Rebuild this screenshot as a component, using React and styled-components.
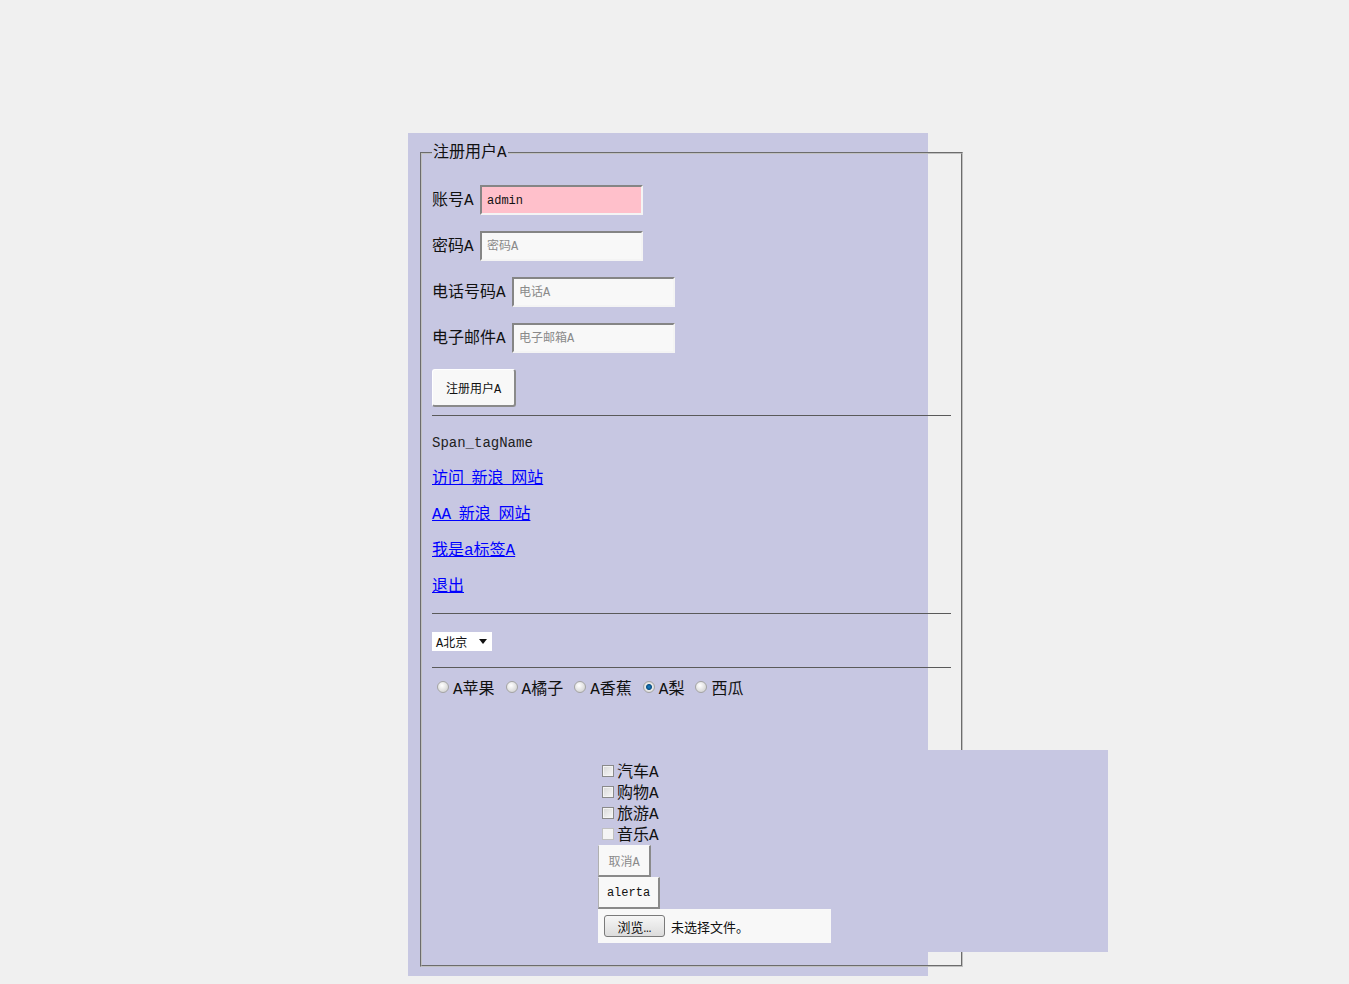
import React from "react";
import styled, { createGlobalStyle } from "styled-components";

const Global = createGlobalStyle`
    body{
        margin:0;
        background:#f0f0f0;
        font-family:"Liberation Mono","Noto Sans CJK SC",monospace;
        color:#111;
    }
`

const lavender = "#c7c7e2"

const Panel = styled.div`
    width:520px;
    box-sizing:border-box;
    margin:133px 0 0 408px;
    padding:10px 0 9px 12px;
    background:${lavender};
`
const Fieldset = styled.fieldset`
    width:543px;
    box-sizing:border-box;
    margin:0;
    min-width:0;
    padding:0 10px 13px 10px;
    border:2px groove #c0c0c0;
`
const Legend = styled.legend`
    padding:0 1px;
    font-size:16px;
    line-height:20px;
`
const Form = styled.div`
    padding-top:22px;
`
const FormRow = styled.div`
    display:flex;
    align-items:center;
    height:30px;
    margin-bottom:16px;
`
const Label = styled.label`
    width:${p=>p.w}px;
    font-size:16px;
    line-height:16px;
    padding-top:1px;
    white-space:nowrap;
`
const Input = styled.input`
    width:163px;
    height:30px;
    box-sizing:border-box;
    border-style:solid;
    border-width:2px;
    border-color:#858585 #f4f4f4 #f4f4f4 #858585;
    padding:1px 5px 0;
    margin:0;
    outline:none;
    font-family:"Liberation Mono","Noto Sans CJK SC",monospace;
    font-size:12px;
    color:#111;
    background:${p=>p.pink ? "#ffc0cb" : "#f8f8f8"};
    &::placeholder{ color:#8a8a8a; }
`
const SubmitButton = styled.button`
    width:84px;
    height:38px;
    box-sizing:border-box;
    margin:0;
    padding:0;
    border-style:solid;
    border-width:1px 2px 2px 1px;
    border-color:#fff #8a8a8a #8a8a8a #fff;
    border-radius:3px;
    background:#f8f8f8;
    font-family:"Liberation Mono","Noto Sans CJK SC",monospace;
    font-size:12px;
    color:#111;
`
const Rule = styled.hr`
    margin:${p=>p.top}px 0 0;
    border:0;
    border-top:1px solid #5a5a5a;
    height:0;
`
const Items = styled.div`
    padding-top:9px;
`
const Item = styled.div`
    height:36px;
    line-height:36px;
    font-size:${p=>p.small ? 14 : 16}px;
    color:#222;
`
const Link = styled.a`
    color:#0000ff;
    text-decoration:underline;
    font-size:16px;
    word-spacing:-2px;
`
const SelectBox = styled.div`
    display:flex;
    align-items:center;
    justify-content:space-between;
    width:60px;
    height:19px;
    box-sizing:border-box;
    margin-top:18px;
    padding:0 5px 0 4px;
    background:#fff;
    font-size:12px;
`
const RadioRow = styled.div`
    display:flex;
    align-items:center;
    height:20px;
    margin-top:9px;
`
const Radio = styled.input.attrs({type:"radio"})`
    appearance:none;
    width:12px;
    height:12px;
    margin:0 4px 0 5px;
    border:1px solid #a4a4a4;
    border-radius:50%;
    box-sizing:border-box;
    background:radial-gradient(circle at 40% 35%, #ffffff 0, #e4e4e4 50%, #c8c8c8 100%);
    &:checked{
        background:radial-gradient(circle, #1a86c8 0, #0a4f86 2.5px, #e8e8e8 3.5px, #d0d0d0 100%);
    }
`
const RadioLabel = styled.span`
    font-size:16px;
    margin-right:6px;
`
const Extra = styled.div`
    width:510px;
    height:202px;
    box-sizing:border-box;
    margin:53px 0 0 166px;
    padding-top:9px;
    background:${lavender};
`
const CheckRow = styled.div`
    display:flex;
    align-items:center;
    height:21px;
`
const Check = styled.input.attrs({type:"checkbox"})`
    appearance:none;
    width:12px;
    height:12px;
    margin:2px 3px 0 4px;
    box-sizing:border-box;
    border:1px solid ${p=>p.plain ? "#c0c0c0" : "#8a8a8a"};
    background:${p=>p.plain ? "#f4f4f4" : "linear-gradient(135deg, #d8d8d8, #f8f8f8)"};
    box-shadow:${p=>p.plain ? "none" : "inset 0 0 0 1px #f4f4f4"};
`
const CheckLabel = styled.span`
    font-size:16px;
`
const PlainButton = styled.button`
    display:block;
    width:${p=>p.w}px;
    height:32px;
    box-sizing:border-box;
    margin:${p=>p.gap ? 2 : 0}px 0 0;
    padding:0;
    border-style:solid;
    border-width:1px 2px 2px 1px;
    border-color:#f8f8f8 #8a8a8a #8a8a8a #b0b0b0;
    background:#f8f8f8;
    font-family:"Liberation Mono","Noto Sans CJK SC",monospace;
    font-size:12px;
    color:${p=>p.muted ? "#8a8a8a" : "#111"};
`
const FileRow = styled.div`
    display:flex;
    align-items:center;
    width:233px;
    height:34px;
    box-sizing:border-box;
    padding-left:6px;
    background:#f8f8f8;
`
const BrowseButton = styled.button`
    width:61px;
    height:22px;
    box-sizing:border-box;
    margin:0 6px 0 0;
    padding:0;
    border:1px solid #7a7a7a;
    border-radius:3px;
    background:linear-gradient(#f6f6f6, #dcdcdc);
    font-family:"Liberation Mono","Noto Sans CJK SC",monospace;
    font-size:13px;
    color:#111;
`
const FileText = styled.span`
    font-size:13px;
`

const fruits = ["A苹果","A橘子","A香蕉","A梨","西瓜"]
const hobbies = ["汽车A","购物A","旅游A","音乐A"]

const App = () => {
    return(
        <>
            <Global/>
            <Panel>
                <Fieldset>
                    <Legend>注册用户A</Legend>
                    <Form>
                        <FormRow>
                            <Label w={48}>账号A</Label>
                            <Input pink defaultValue="admin"/>
                        </FormRow>
                        <FormRow>
                            <Label w={48}>密码A</Label>
                            <Input placeholder="密码A"/>
                        </FormRow>
                        <FormRow>
                            <Label w={80}>电话号码A</Label>
                            <Input placeholder="电话A"/>
                        </FormRow>
                        <FormRow>
                            <Label w={80}>电子邮件A</Label>
                            <Input placeholder="电子邮箱A"/>
                        </FormRow>
                        <SubmitButton>注册用户A</SubmitButton>
                    </Form>
                    <Rule top={8}/>
                    <Items>
                        <Item small>Span_tagName</Item>
                        <Item><Link href="#">访问 新浪 网站</Link></Item>
                        <Item><Link href="#">AA 新浪 网站</Link></Item>
                        <Item><Link href="#">我是a标签A</Link></Item>
                        <Item><Link href="#">退出</Link></Item>
                    </Items>
                    <Rule top={8}/>
                    <SelectBox>
                        <span>A北京</span>
                        <svg width="8" height="5" viewBox="0 0 8 5"><path d="M0 0h8L4 5z" fill="#111"/></svg>
                    </SelectBox>
                    <Rule top={16}/>
                    <RadioRow>
                        {fruits.map(f=>(
                            <React.Fragment key={f}>
                                <Radio name="fruit" defaultChecked={f==="A梨"}/>
                                <RadioLabel>{f}</RadioLabel>
                            </React.Fragment>
                        ))}
                    </RadioRow>
                    <Extra>
                        {hobbies.map((h,i)=>(
                            <CheckRow key={h}>
                                <Check plain={i===3}/>
                                <CheckLabel>{h}</CheckLabel>
                            </CheckRow>
                        ))}
                        <PlainButton w={53} muted gap>取消A</PlainButton>
                        <PlainButton w={62}>alerta</PlainButton>
                        <FileRow>
                            <BrowseButton>浏览…</BrowseButton>
                            <FileText>未选择文件。</FileText>
                        </FileRow>
                    </Extra>
                </Fieldset>
            </Panel>
        </>
    )
}
export default App;
